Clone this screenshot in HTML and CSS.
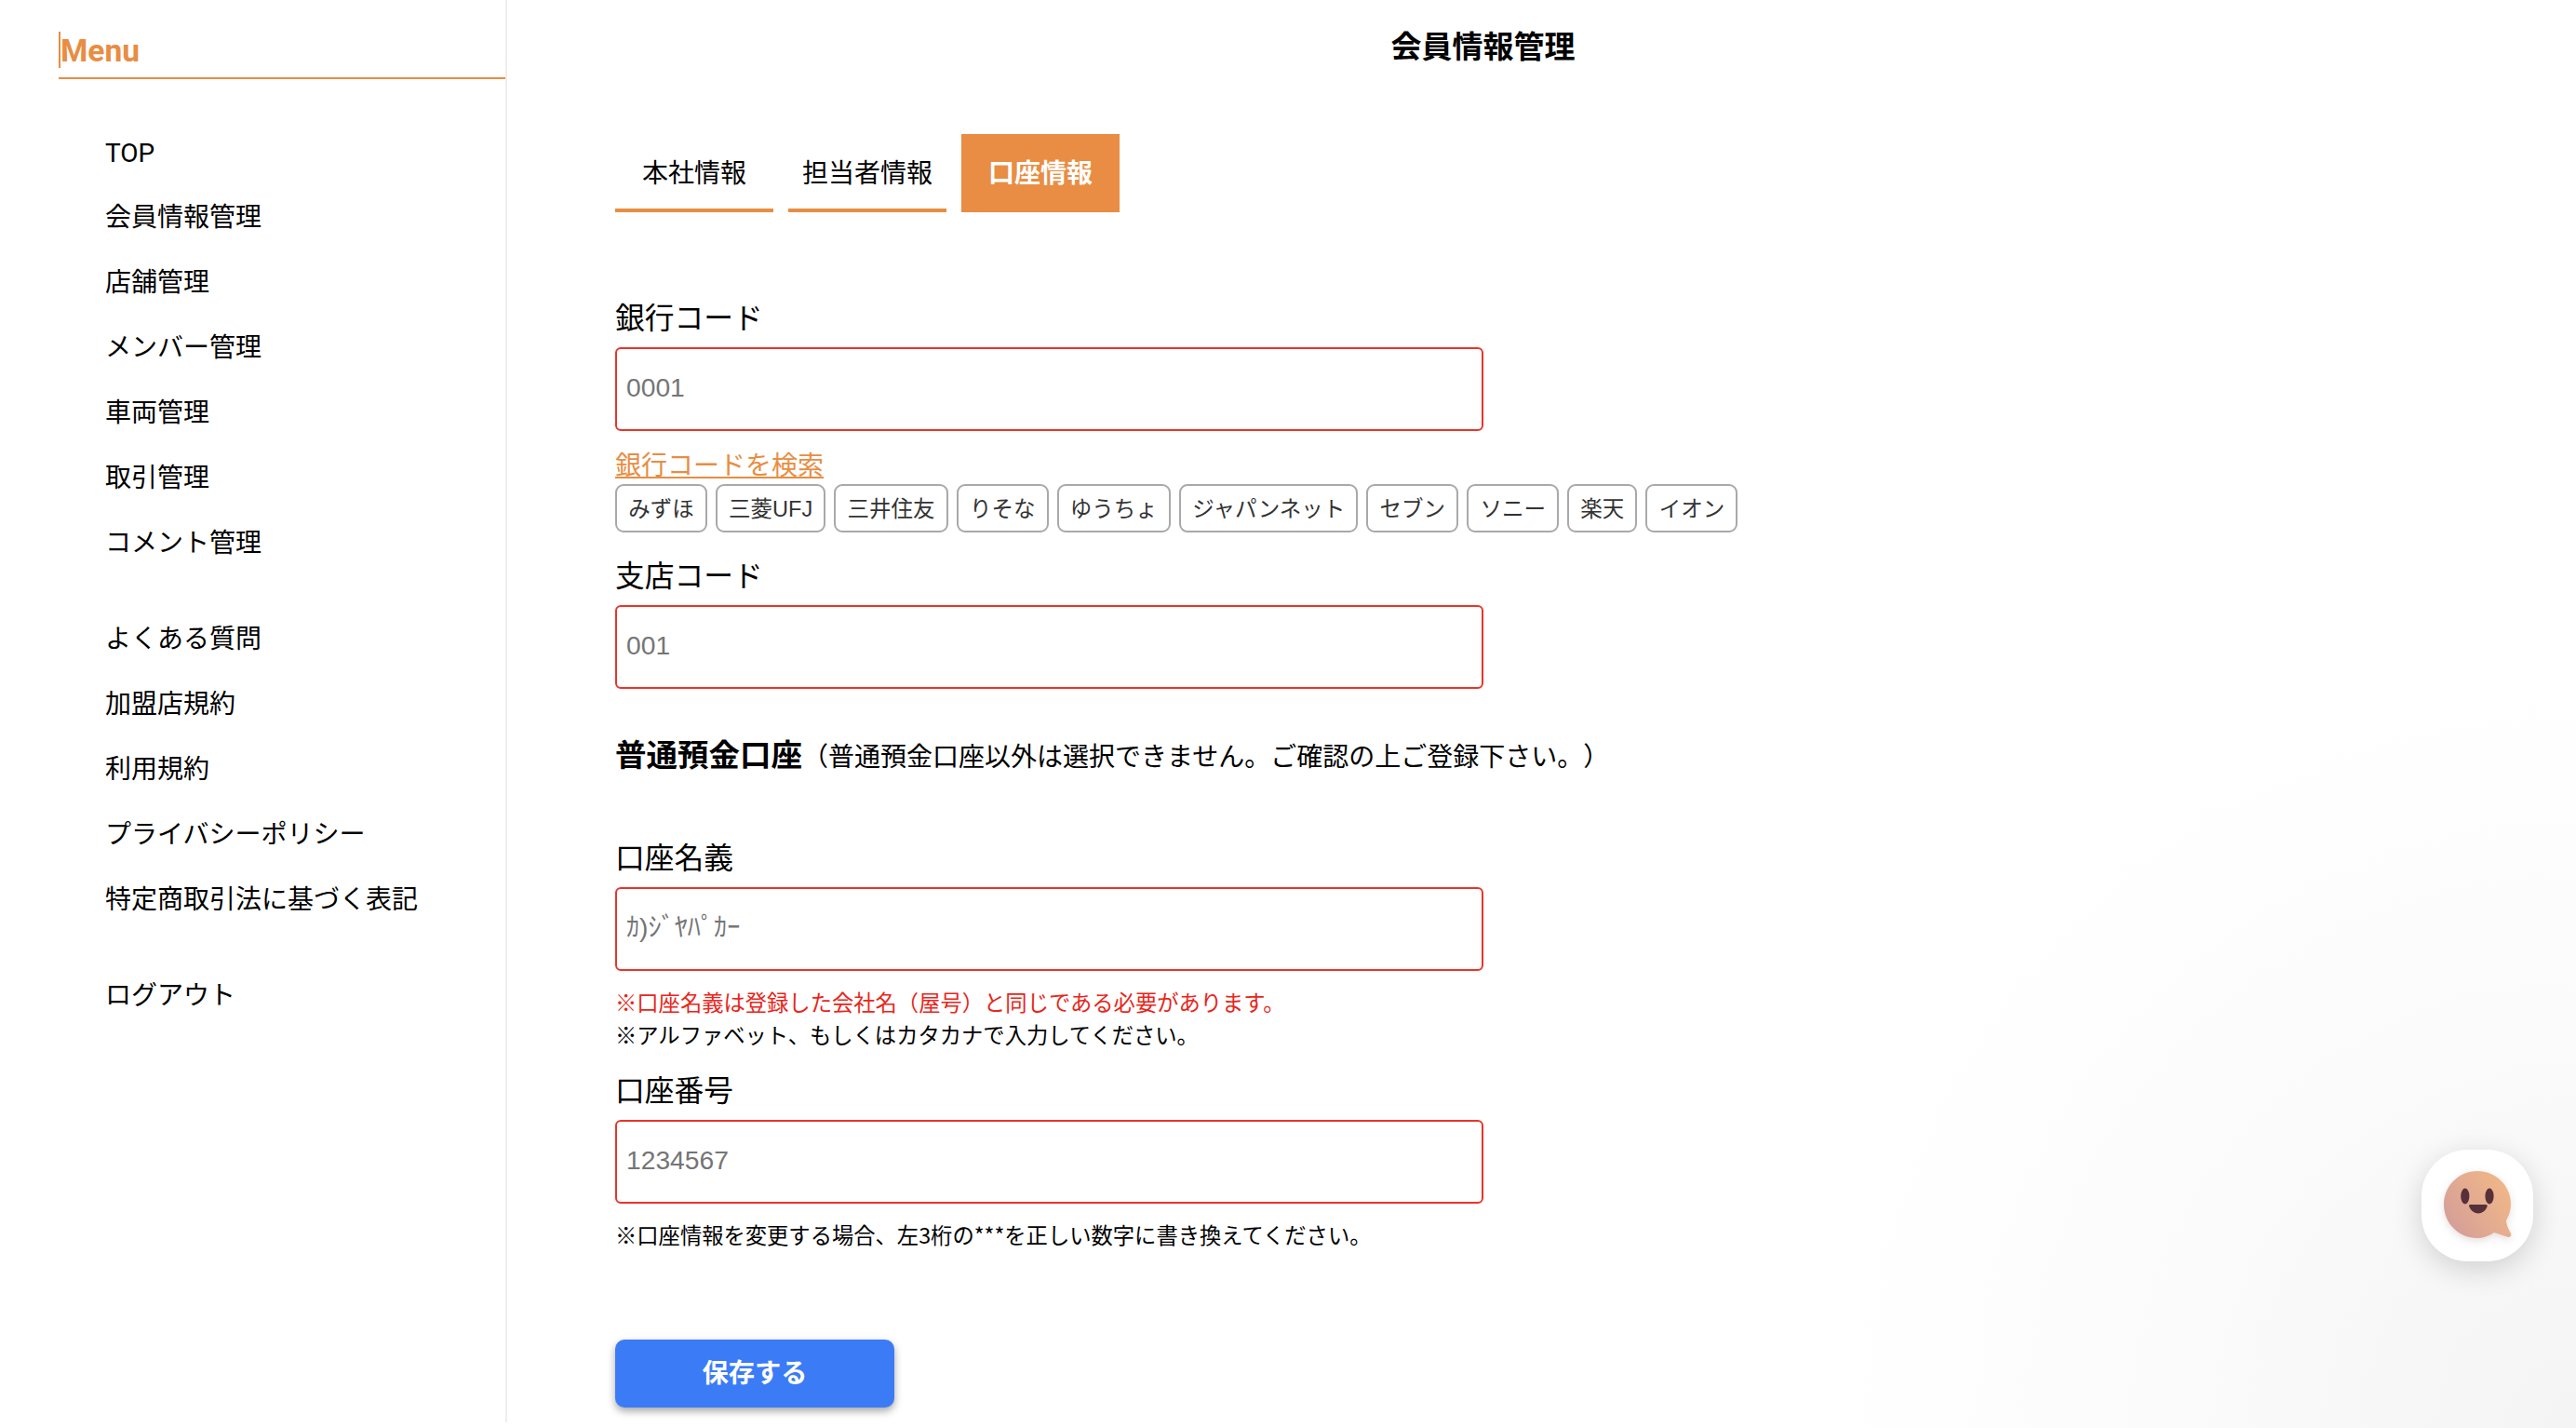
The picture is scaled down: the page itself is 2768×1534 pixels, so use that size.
FILE: index.html
```html
<!DOCTYPE html>
<html lang="ja">
<head>
<meta charset="utf-8">
<title>会員情報管理</title>
<link rel="stylesheet" href="styles.css">
</head>
<body>
<div class="page">
  <aside class="sidebar">
    <div class="menu-head"><span class="menu-title">Menu</span></div>
    <ul class="nav">
      <li class="nav-latin">TOP</li>
      <li>会員情報管理</li>
      <li>店舗管理</li>
      <li>メンバー管理</li>
      <li>車両管理</li>
      <li>取引管理</li>
      <li>コメント管理</li>
    </ul>
    <ul class="nav">
      <li>よくある質問</li>
      <li>加盟店規約</li>
      <li>利用規約</li>
      <li>プライバシーポリシー</li>
      <li>特定商取引法に基づく表記</li>
    </ul>
    <ul class="nav">
      <li>ログアウト</li>
    </ul>
  </aside>
  <main class="main">
    <h1 class="title">会員情報管理</h1>
    <div class="content">
      <div class="tabs">
        <a class="tab">本社情報</a>
        <a class="tab">担当者情報</a>
        <a class="tab tab-active">口座情報</a>
      </div>
      <form class="form">
        <label class="label label-first">銀行コード</label>
        <input class="input" type="text" placeholder="0001">
        <a class="search-link">銀行コードを検索</a>
        <div class="chips">
          <button type="button" class="chip">みずほ</button>
          <button type="button" class="chip">三菱UFJ</button>
          <button type="button" class="chip">三井住友</button>
          <button type="button" class="chip">りそな</button>
          <button type="button" class="chip">ゆうちょ</button>
          <button type="button" class="chip">ジャパンネット</button>
          <button type="button" class="chip">セブン</button>
          <button type="button" class="chip">ソニー</button>
          <button type="button" class="chip">楽天</button>
          <button type="button" class="chip">イオン</button>
        </div>
        <label class="label label-branch">支店コード</label>
        <input class="input" type="text" placeholder="001">
        <p class="account-type"><strong class="account-strong">普通預金口座</strong><span class="account-note">（普通預金口座以外は選択できません。ご確認の上ご登録下さい。）</span></p>
        <label class="label label-name">口座名義</label>
        <input class="input" type="text" placeholder="ｶ)ｼﾞﾔﾊﾟｶｰ">
        <p class="note note-red">※口座名義は登録した会社名（屋号）と同じである必要があります。</p>
        <p class="note">※アルファベット、もしくはカタカナで入力してください。</p>
        <label class="label label-number">口座番号</label>
        <input class="input" type="text" placeholder="1234567">
        <p class="note note-change">※口座情報を変更する場合、左3桁の***を正しい数字に書き換えてください。</p>
        <button type="button" class="save">保存する</button>
      </form>
    </div>
  </main>
</div>
<div class="chat-widget">
  <svg class="chat-face" width="74" height="74" viewBox="0 0 74 74" aria-hidden="true">
    <defs>
      <linearGradient id="faceFill" x1="0" y1="1" x2="1" y2="0.35">
        <stop offset="0" stop-color="#cf9a9c"/>
        <stop offset="0.55" stop-color="#e3ab90"/>
        <stop offset="1" stop-color="#efb689"/>
      </linearGradient>
    </defs>
    <path fill="url(#faceFill)" d="M36 0C56 0 72 16 72 35C72 42 70 48 67 53C67 58 70 63 72 67C73 70 71 71 69 71C63 69 58 67 54 66C48 70 42 72 36 72C16 72 0 56 0 36C0 16 16 0 36 0Z"/>
    <ellipse cx="22.8" cy="27" rx="4.6" ry="8.4" fill="#57303a"/>
    <ellipse cx="49" cy="27" rx="4.6" ry="8.4" fill="#57303a"/>
    <path fill="#57303a" d="M28.5 36H45C46.5 36 47 37 46.5 38.300C45 42.500 41 45.500 37 45.500C33 45.500 29 42.500 27.300 38.300C26.800 37 27 36 28.500 36Z"/>
  </svg>
</div>
</body>
</html>
```
FILE: styles.css
```css
* {
  box-sizing: border-box;
}

html,
body {
  margin: 0;
  height: 100%;
}

body {
  height: 1534px;
  overflow: hidden;
  color: #000;
  font-family: Roboto, "Noto Sans CJK JP", sans-serif;
  text-spacing-trim: space-all;
  background: radial-gradient(circle 800px at 100% 100%, #f4f4f4 0%, #fbfbfb 55%, #fff 100%);
}

.page {
  display: flex;
  align-items: flex-start;
  height: 1534px;
}

.sidebar {
  flex: 0 0 545px;
  height: 1528px;
  padding-left: 63px;
  background: #fff;
  border-right: 2px solid #eeeeee;
}

.menu-head {
  height: 85px;
  padding-top: 34px;
  border-bottom: 2px solid #e88d43;
}

.menu-title {
  display: block;
  width: max-content;
  height: 39px;
  padding-right: 2px;
  border-left: 2px solid #e88d43;
  color: #e88d43;
  font-size: 33.5px;
  font-weight: 700;
  line-height: 41px;
}

.nav {
  margin: 33px 0 0;
  padding: 0 0 0 50px;
  list-style: none;
}

.nav:first-of-type {
  margin-top: 44px;
}

.nav li {
  height: 70px;
  font-size: 28px;
  line-height: 70px;
  white-space: nowrap;
}

.nav .nav-latin {
  line-height: 72px;
}

.main {
  flex: 1;
  min-width: 0;
  padding-right: 126px;
}

.title {
  margin: 0;
  height: 100px;
  font-size: 33px;
  font-weight: 700;
  line-height: 102px;
  text-align: center;
}

.content {
  padding: 44px 0 0 116px;
}

.tabs {
  display: flex;
  gap: 16px;
}

.tab {
  width: 170px;
  height: 84px;
  border-bottom: 4px solid #e88d43;
  font-size: 28px;
  line-height: 85px;
  text-align: center;
}

.tab-active {
  background: #e88d43;
  color: #fff;
  font-weight: 700;
}

.form {
  display: block;
}

.label {
  display: block;
  height: 50px;
  margin-bottom: 7px;
  font-size: 31.76px;
  line-height: 54px;
}

.label-first {
  margin-top: 88px;
}

.label-branch {
  margin-top: 21px;
}

.label-name {
  margin-top: 61px;
}

.label-number {
  margin-top: 16px;
}

.input {
  display: block;
  width: 933px;
  height: 90px;
  padding: 0 10px 3px;
  border: 2px solid #e8352a;
  border-radius: 6px;
  outline: none;
  background: #fff;
  font-family: "Liberation Sans", "Noto Sans CJK JP", sans-serif;
  font-size: 28.24px;
}

.input::placeholder {
  color: #757575;
  opacity: 1;
}

.search-link {
  display: block;
  width: max-content;
  height: 40px;
  margin-top: 15px;
  color: #e88d43;
  font-size: 28px;
  line-height: 46px;
  text-decoration: underline;
}

.chips {
  display: flex;
  gap: 9px;
  margin-top: 2px;
}

.chip {
  height: 52px;
  padding: 0 12.2px 2px;
  border: 2px solid #a9a9a9;
  border-radius: 9px;
  background: #fff;
  color: #333;
  font-family: "Liberation Sans", "Noto Sans CJK JP", sans-serif;
  font-size: 23.5px;
  white-space: nowrap;
}

.account-type {
  height: 50px;
  margin: 45px 0 0;
  line-height: 53px;
  white-space: nowrap;
}

.account-strong {
  font-size: 33.5px;
  font-weight: 700;
}

.account-note {
  font-size: 28px;
}

.note {
  height: 35px;
  margin: 0;
  font-family: "Noto Sans CJK JP", sans-serif;
  font-size: 23.3px;
  line-height: 33px;
  white-space: nowrap;
}

.note-red {
  margin-top: 17px;
  color: #e8261a;
}

.note-change {
  margin-top: 17px;
}

.save {
  display: block;
  width: 300px;
  height: 73px;
  margin-top: 94px;
  padding: 0 0 6px;
  border: 0;
  border-radius: 10px;
  background: #3b7cf6;
  box-shadow: 0 4px 8px rgba(0, 0, 0, 0.35);
  color: #fff;
  font-family: Roboto, "Noto Sans CJK JP", sans-serif;
  font-size: 28.24px;
  font-weight: 700;
}

.chat-widget {
  position: fixed;
  right: 46px;
  bottom: 179px;
  display: flex;
  align-items: center;
  justify-content: center;
  width: 120px;
  height: 120px;
  padding-left: 2px;
  border-radius: 50px;
  background: #fff;
  box-shadow: 0 8px 32px rgba(0, 0, 0, 0.16);
}

.chat-face {
  display: block;
  filter: drop-shadow(0 3px 4px rgba(120, 80, 80, 0.18));
}
```
